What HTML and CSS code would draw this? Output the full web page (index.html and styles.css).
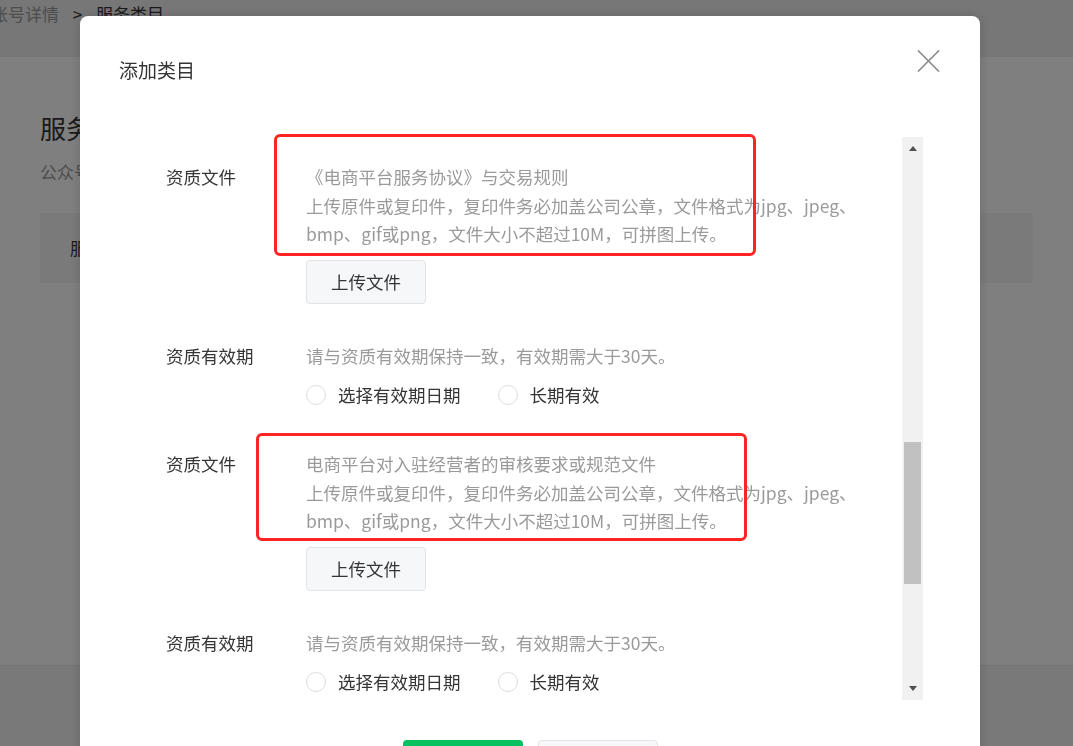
FILE: index.html
```html
<!DOCTYPE html>
<html lang="zh-CN">
<head>
    <meta charset="UTF-8">
    <meta name="viewport" content="width=device-width, initial-scale=1.0">
    <title>服务类目</title>
    <link rel="stylesheet" href="styles.css">
</head>
<body>
    <div class="page">
        <div class="page-top">
            <div class="crumbs">
                <span class="crumb-link">账号详情</span>
                <span class="crumb-sep">&gt;</span>
                <span class="crumb-cur">服务类目</span>
            </div>
        </div>
        <div class="page-main">
            <h2 class="page-title">服务类目</h2>
            <p class="page-desc">公众号可设置的服务类目，需与账号主体经营范围一致</p>
            <div class="page-panel">服务类目列表</div>
        </div>
        <div class="page-foot"></div>
    </div>

    <div class="mask">
        <div class="dialog">
            <div class="dialog-hd">
                <h3 class="dialog-title">添加类目</h3>
                <button class="dialog-close" aria-label="关闭">
                    <svg width="23" height="22" viewBox="0 0 23 22">
                        <path d="M1 0.5 L22 21.5 M22 0.5 L1 21.5" stroke="#8a8a8a" stroke-width="1.6" fill="none"/>
                    </svg>
                </button>
            </div>

            <div class="dialog-bd">
                <div class="scroll-view">
                    <div class="form-row row-file">
                        <div class="form-label">资质文件</div>
                        <div class="form-field">
                            <p class="form-desc">《电商平台服务协议》与交易规则<br>上传原件或复印件，复印件务必加盖公司公章，文件格式为jpg、jpeg、bmp、gif或png，文件大小不超过10M，可拼图上传。</p>
                            <button class="btn-upload">上传文件</button>
                        </div>
                    </div>
                    <div class="form-row row-date">
                        <div class="form-label">资质有效期</div>
                        <div class="form-field">
                            <p class="form-desc">请与资质有效期保持一致，有效期需大于30天。</p>
                            <div class="radio-group">
                                <label class="radio"><span class="radio-dot"></span>选择有效期日期</label>
                                <label class="radio"><span class="radio-dot"></span>长期有效</label>
                            </div>
                        </div>
                    </div>
                    <div class="form-row row-file">
                        <div class="form-label">资质文件</div>
                        <div class="form-field">
                            <p class="form-desc">电商平台对入驻经营者的审核要求或规范文件<br>上传原件或复印件，复印件务必加盖公司公章，文件格式为jpg、jpeg、bmp、gif或png，文件大小不超过10M，可拼图上传。</p>
                            <button class="btn-upload">上传文件</button>
                        </div>
                    </div>
                    <div class="form-row row-date">
                        <div class="form-label">资质有效期</div>
                        <div class="form-field">
                            <p class="form-desc">请与资质有效期保持一致，有效期需大于30天。</p>
                            <div class="radio-group">
                                <label class="radio"><span class="radio-dot"></span>选择有效期日期</label>
                                <label class="radio"><span class="radio-dot"></span>长期有效</label>
                            </div>
                        </div>
                    </div>
                </div>
                <div class="scrollbar">
                    <span class="scroll-arrow up"></span>
                    <div class="scroll-track">
                        <div class="scroll-thumb"></div>
                    </div>
                    <span class="scroll-arrow down"></span>
                </div>
            </div>

            <div class="dialog-ft">
                <button class="btn btn-primary">确定</button>
                <button class="btn btn-default">取消</button>
            </div>
        </div>
    </div>

    <!-- annotation boxes drawn over the screenshot -->
    <div class="mark mark-1"></div>
    <div class="mark mark-2"></div>
</body>
</html>
```

FILE: styles.css
```css
* {
    box-sizing: border-box;
}
body {
    margin: 0;
    font-family: "Noto Sans CJK SC", "Noto Sans", sans-serif;
    color: #353535;
    background-color: #fff;
    overflow: hidden;
}
p, h2, h3 {
    margin: 0;
    font-weight: normal;
}
button {
    font-family: inherit;
}

/* page behind the dialog */
.page {
    height: 746px;
    display: flex;
    flex-direction: column;
}
.page-top {
    height: 57px;
    background-color: #eeeeee;
}
.crumbs {
    margin-left: -9px;
    font-size: 17px;
    line-height: 28px;
}
.crumb-link {
    color: #9a9a9a;
}
.crumb-sep {
    margin: 0 10px;
    color: #353535;
}
.page-main {
    height: 608px;
    padding: 55px 40px 0;
}
.page-title {
    font-size: 26px;
    line-height: 32px;
}
.page-desc {
    margin-top: 16px;
    font-size: 17px;
    line-height: 24px;
    color: #9a9a9a;
}
.page-panel {
    margin-top: 29px;
    height: 70px;
    line-height: 70px;
    padding-left: 30px;
    font-size: 17px;
    background-color: #f5f5f6;
}
.page-foot {
    flex: 1;
    background-color: #f2f2f2;
    border-top: 1px solid #e6e6e6;
}

/* dialog */
.mask {
    position: fixed;
    top: 0;
    left: 0;
    right: 0;
    bottom: 0;
    background-color: rgba(0, 0, 0, 0.5);
    display: flex;
    justify-content: center;
    align-items: flex-start;
    padding: 16px 13px 0 0;
    overflow: hidden;
}
.dialog {
    width: 900px;
    height: 820px;
    flex-shrink: 0;
    background-color: #fff;
    border-radius: 8px;
    box-shadow: 0 0 12px rgba(0, 0, 0, 0.15);
}
.dialog-hd {
    height: 121px;
    padding: 40px 40px 0 39px;
    display: flex;
    justify-content: space-between;
    align-items: flex-start;
}
.dialog-title {
    font-size: 19px;
    line-height: 28px;
    color: #353535;
}
.dialog-close {
    margin-top: -6px;
    padding: 0;
    border: none;
    background: none;
    width: 23px;
    height: 22px;
    cursor: pointer;
}
.dialog-close svg {
    display: block;
}
.dialog-bd {
    height: 563px;
    margin: 0 57px 0 39px;
    display: flex;
}
.scroll-view {
    flex: 1;
    overflow: hidden;
    padding: 26px 0 0 47px;
}

.form-row {
    display: flex;
    margin-bottom: 38px;
    font-size: 17.5px;
    line-height: 28.5px;
}
.form-label {
    width: 140px;
    flex-shrink: 0;
    color: #353535;
}
.form-field {
    flex: 1;
}
.form-desc {
    max-width: 566px;
    color: #9a9a9a;
}
.btn-upload {
    display: block;
    margin-top: 11px;
    width: 120px;
    height: 44px;
    font-size: 17.5px;
    color: #353535;
    background-color: #f6f7f9;
    border: 1px solid #e2e3e6;
    border-radius: 4px;
    cursor: pointer;
}
.radio-group {
    margin-top: 8px;
    height: 34px;
    display: flex;
    align-items: center;
    gap: 37px;
}
.radio {
    display: flex;
    align-items: center;
    color: #353535;
    cursor: pointer;
}
.radio-dot {
    width: 20px;
    height: 20px;
    margin-right: 12px;
    border: 1px solid #dedede;
    border-radius: 50%;
    background-color: #fff;
}

/* fake scrollbar */
.scrollbar {
    width: 21px;
    flex-shrink: 0;
    background-color: #f1f1f1;
    display: flex;
    flex-direction: column;
    align-items: center;
}
.scroll-arrow {
    width: 0;
    height: 0;
    border-left: 4.5px solid transparent;
    border-right: 4.5px solid transparent;
}
.scroll-arrow.up {
    margin: 9px 0 7px;
    border-bottom: 5px solid #505050;
}
.scroll-arrow.down {
    margin: 7px 0 9px;
    border-top: 5px solid #505050;
}
.scroll-track {
    flex: 1;
    width: 100%;
    padding: 284px 2px 0;
}
.scroll-thumb {
    height: 142px;
    background-color: #c1c1c1;
}

.dialog-ft {
    display: flex;
    justify-content: center;
    gap: 15px;
    padding-top: 40px;
}
.btn {
    width: 120px;
    height: 44px;
    font-size: 17px;
    border-radius: 4px;
    cursor: pointer;
}
.btn-primary {
    color: #fff;
    background-color: #07c160;
    border: none;
}
.btn-default {
    color: #353535;
    background-color: #f6f7f9;
    border: 1px solid #e2e3e6;
}

/* red annotation boxes */
.mark {
    position: absolute;
    border: 3px solid #ff2424;
    border-radius: 6px;
}
.mark-1 {
    left: 274px;
    top: 134px;
    width: 482px;
    height: 122px;
}
.mark-2 {
    left: 256px;
    top: 433px;
    width: 491px;
    height: 108px;
}
```
